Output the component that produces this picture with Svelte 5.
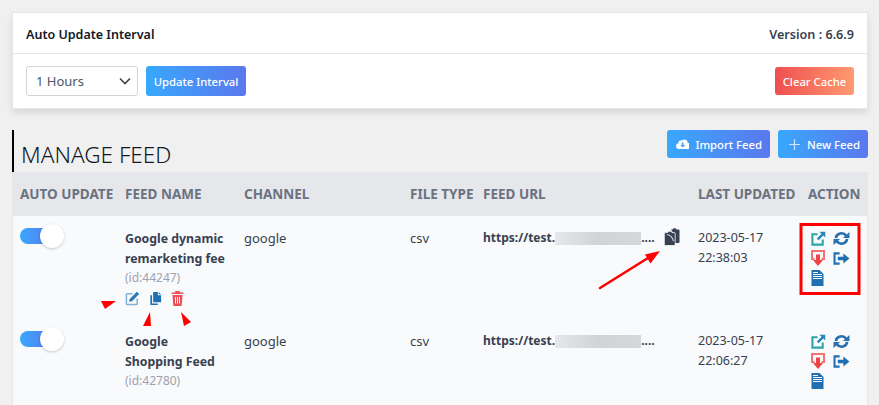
<script>
  const feeds = [
    { name: "Google dynamic remarketing fee", id: 44247, channel: "google", type: "csv", date: "2023-05-17", time: "22:38:03", tools: true, copy: true },
    { name: "Google Shopping Feed", id: 42780, channel: "google", type: "csv", date: "2023-05-17", time: "22:06:27", tools: false, copy: false }
  ]
</script>

<div class="page">
  <section class="card">
    <div class="card-head">
      <h2>Auto Update Interval</h2>
      <span class="version">Version : 6.6.9</span>
    </div>
    <div class="card-body">
      <div class="select">
        <span>1 Hours</span>
        <svg width="12" height="8" viewBox="0 0 12 8"><path d="M1 1.5l5 5 5-5" fill="none" stroke="#444" stroke-width="1.6" /></svg>
      </div>
      <button class="btn blue small">Update Interval</button>
      <button class="btn red clear">Clear Cache</button>
    </div>
  </section>

  <div class="title-row">
    <h1>MANAGE FEED</h1>
    <div class="title-actions">
      <button class="btn blue import">
        <svg width="15" height="12" viewBox="0 0 16 13"><path fill="#fff" d="M3.600 12.600A3.500 3.500 0 0 1 2.700 5.700 3.600 3.600 0 0 1 7.400 2.200 4 4 0 0 1 14 4.900 3.900 3.900 0 0 1 12.700 12.600Z" /><path fill="#4a9df8" d="M7 4.600h2v3.200h2L8 10.800 5 7.800h2Z" /></svg>
        Import Feed
      </button>
      <button class="btn blue add">
        <svg width="11" height="11" viewBox="0 0 11 11"><path d="M5.500 0v11M0 5.500h11" stroke="#cfe4fd" stroke-width="1.200" /></svg>
        New Feed
      </button>
    </div>
  </div>

  <div class="table">
    <div class="row head">
      <div>AUTO UPDATE</div>
      <div>FEED NAME</div>
      <div>CHANNEL</div>
      <div>FILE TYPE</div>
      <div>FEED URL</div>
      <div>LAST UPDATED</div>
      <div>ACTION</div>
    </div>
    {#each feeds as feed}
      <div class="row item">
        <div><span class="toggle"><i></i></span></div>
        <div class="name">
          <strong>{feed.name}</strong>
          <small>(id:{feed.id})</small>
          {#if feed.tools}
            <div class="tools">
              <svg width="15" height="15" viewBox="0 0 16 16"><path d="M8 3H2.500A1 1 0 0 0 1.500 4v9.500a1 1 0 0 0 1 1H12a1 1 0 0 0 1-1V8" fill="none" stroke="#7fb0d8" stroke-width="1.600" /><path fill="#2b78b8" d="M12.600.8l2.500 2.500-7.600 7.600-3.100.6.600-3.100Z" /></svg>
              <svg width="13" height="14" viewBox="0 0 13 15"><path fill="#1f6fb2" d="M4 0h5v3.500h3.500V11H4ZM10 0l2.500 2.500H10ZM2.800 3.500V12.200H9V14H1V3.500Z" /></svg>
              <svg width="13" height="15" viewBox="0 0 13 15"><path fill="#ef5058" d="M4.500 0h4l.7 1.400h3.300V3H.5V1.400h3.300ZM1.500 4h10l-.7 10a1 1 0 0 1-1 1H3.200a1 1 0 0 1-1-1Z" /><path d="M4.500 6v6.500M6.500 6v6.500M8.500 6v6.500" stroke="#f9fafb" stroke-width="1" /></svg>
            </div>
          {/if}
        </div>
        <div>{feed.channel}</div>
        <div>{feed.type}</div>
        <div class="url">
          <strong>https://test.</strong><span class="blur"></span><strong class="dots">....</strong>
          {#if feed.copy}
            <svg class="clip" width="16" height="18" viewBox="0 0 16 18">
              <path fill="#374151" d="M7 1.500 8.500 1.500 9.500 .3 11.500.3 12.500 1.500H14.500a1 1 0 0 1 1 1V14a1 1 0 0 1-1 1H10V6Z" />
              <path fill="#374151" stroke="#f9fafb" stroke-width=".8" d="M1.500 4.600H3.500L4.500 3.200H7L8 4.600H10a1.200 1.200 0 0 1 1.200 1.200V16.300a1.200 1.200 0 0 1-1.200 1.200H1.500A1.200 1.200 0 0 1 .3 16.300V5.800A1.200 1.200 0 0 1 1.500 4.600Z" />
              <path d="M3 6.500c3.500.5 5.500 3 6.500 6.500" fill="none" stroke="#d7dadf" stroke-width="1.100" />
            </svg>
          {/if}
        </div>
        <div class="date">{feed.date}<br />{feed.time}</div>
        <div class="actions">
          <svg width="15" height="15" viewBox="0 0 16 16"><path d="M7 3.500H1.500v11h11V9" fill="none" stroke="#2aa5a8" stroke-width="2.200" /><path fill="#2b86b8" d="M9 .8h6.200V7l-2.100-2.100-5 5-1.900-1.900 5-5Z" /></svg>
          <svg width="17" height="15" viewBox="0 0 18 16"><path d="M3 7.500A6 5.500 0 0 1 14 5M15 8.500A6 5.500 0 0 1 4 11" fill="none" stroke="#2a6fb0" stroke-width="2.800" /><path fill="#2a6fb0" d="M10.500 7.500h7V1ZM7.500 8.500H.5v6.500Z" /></svg>
          <svg width="14" height="16" viewBox="0 0 14 16"><path d="M3.500 9H1V1h12v8h-2.500" fill="none" stroke="#f87171" stroke-width="2" /><path fill="#ef4444" d="M5 4.500h4V10h3l-5 6-5-6h3Z" /></svg>
          <svg width="17" height="13" viewBox="0 0 18 14"><path d="M7 1.500H1.500v11H7" fill="none" stroke="#1f6fb2" stroke-width="2.200" /><path fill="#1f6fb2" d="M5 5h6V1.500L17.500 7 11 12.500V9H5Z" /></svg>
          <svg width="13" height="16" viewBox="0 0 13 16"><path fill="#1f6fb2" d="M.5 0h8L12.500 4v12H.5Z" /><path d="M2 2.500h5M2 4.500h9M2 6.500h9M2 8.500h9" stroke="#f9fafb" stroke-width="1" /></svg>
        </div>
      </div>
    {/each}
  </div>

  <svg class="marks" width="879" height="405" viewBox="0 0 879 405">
    <rect x="801" y="224.500" width="58" height="69" fill="none" stroke="#f00" stroke-width="3" />
    <path d="M600 288 648 258" stroke="#f00" stroke-width="2.600" stroke-linecap="round" />
    <path d="M660 251 645 254.500 650.500 263.500Z" fill="#f00" />
    <path fill="#f00" d="M101 301 116 301 105 309ZM150 312 151 326 143 326ZM181 312 191 322 184 326Z" />
  </svg>
</div>

<style>
  :global(body) {
    margin: 0;
    background: #f0f0f0;
  }

  .page {
    position: relative;
    height: 405px;
    overflow: hidden;
    padding: 13px 11px 0 12px;
    box-sizing: border-box;
    font-family: "Noto Sans", "Open Sans", sans-serif;
    color: #374151;
    font-size: 13px;
  }

  .card {
    margin: 0 1px 0 1px;
    background: #fff;
    box-shadow: 0 0 0 1px #e5e7eb, 0 4px 8px rgba(0, 0, 0, 0.12);
  }

  .card-head {
    height: 40px;
    padding: 0 13px;
    display: flex;
    align-items: center;
    justify-content: space-between;
    border-bottom: 1px solid #e5e7eb;
  }

  h2 {
    margin: 2px 0 0;
    font-size: 12.500px;
    font-weight: 600;
    color: #111827;
  }

  .version {
    margin-top: 2px;
    font-size: 12.600px;
    font-weight: 600;
  }

  .card-body {
    height: 54px;
    padding: 0 13px;
    display: flex;
    align-items: center;
    gap: 8px;
  }

  .select {
    width: 112px;
    height: 30px;
    box-sizing: border-box;
    padding: 0 6px 0 9px;
    display: flex;
    align-items: center;
    justify-content: space-between;
    border: 1px solid #d1d5db;
    border-radius: 3px;
    font-size: 13px;
    color: #4b5563;
  }

  .btn {
    border: 0;
    border-radius: 3px;
    color: #fff;
    font-family: inherit;
    font-size: 11.300px;
    font-weight: 500;
    white-space: nowrap;
    height: 28px;
    padding: 0 8px;
    display: inline-flex;
    align-items: center;
    justify-content: center;
    gap: 6px;
  }

  .small {
    width: 100px;
    height: 30px;
  }

  .blue {
    background: linear-gradient(90deg, #38a8fd, #5b78ee);
  }

  .red {
    background: linear-gradient(90deg, #ef4f4f, #ff9a70);
  }

  .clear {
    margin-left: auto;
    width: 79px;
  }

  .title-row {
    margin-top: 22px;
    display: flex;
    justify-content: space-between;
    align-items: flex-start;
    height: 42px;
  }

  h1 {
    margin: 0;
    height: 42px;
    box-sizing: border-box;
    padding: 10px 0 0 7px;
    border-left: 2px solid #000;
    font-size: 22.600px;
    line-height: 30px;
    font-weight: 300;
    color: #111827;
  }

  .title-actions {
    display: flex;
    gap: 8px;
  }

  .import {
    width: 103px;
    justify-content: flex-start;
    padding-left: 9px;
  }

  .add {
    width: 90px;
    justify-content: flex-start;
    padding-left: 11px;
  }

  .add svg {
    margin-right: 1px;
  }

  .table {
    border-left: 1px solid #e5e7eb;
    border-right: 1px solid #e5e7eb;
  }

  .row {
    display: grid;
    grid-template-columns: 105px 119px 166px 73px 215px 110px 1fr;
    padding-left: 7px;
  }

  .head {
    height: 44px;
    align-items: center;
    background: #e5e7eb;
    color: #6b7280;
    font-size: 13.500px;
    font-weight: 700;
    white-space: nowrap;
  }

  .item {
    height: 103px;
    background: #f9fafb;
    line-height: 20px;
    padding-top: 12px;
    box-sizing: border-box;
  }

  .toggle {
    display: block;
    position: relative;
    width: 33px;
    height: 16px;
    border-radius: 8px;
    background: linear-gradient(90deg, #38a8fd, #5b78ee);
  }

  .toggle i {
    position: absolute;
    left: 20px;
    top: -4px;
    width: 24px;
    height: 24px;
    border-radius: 50%;
    background: #fff;
    box-shadow: 0 1px 3px rgba(0, 0, 0, 0.2);
  }

  .name strong {
    display: block;
    max-width: 103px;
    padding-top: 1px;
    margin-bottom: -1px;
    font-size: 12.300px;
    font-weight: 700;
    color: #374151;
  }

  .name small {
    display: block;
    font-size: 12px;
    color: #9ca3af;
  }

  .tools {
    display: flex;
    gap: 9px;
    margin-top: 3px;
    align-items: center;
  }

  .url {
    display: flex;
    font-size: 12px;
    align-items: flex-start;
  }

  .blur {
    width: 86px;
    height: 13px;
    margin-top: 4px;
    background: linear-gradient(90deg, #e6e7ea, #d2d3d7 50%, #d6d7da);
  }

  .clip {
    margin: 0 0 0 9px;
  }

  .date {
    font-size: 12.500px;
  }

  .actions {
    display: grid;
    grid-template-columns: 22px 20px;
    gap: 4px 0;
    margin-top: 3px;
    align-content: start;
    justify-items: start;
    align-items: center;
    padding-left: 3px;
  }

  .marks {
    position: absolute;
    left: 0;
    top: 0;
    pointer-events: none;
  }
</style>
